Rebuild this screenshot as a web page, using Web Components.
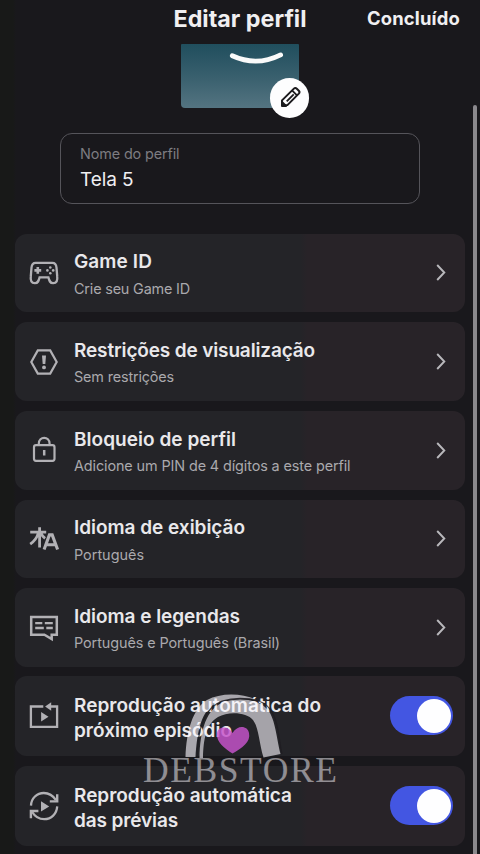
<!DOCTYPE html>
<html lang="pt-BR">
<head>
<meta charset="utf-8">
<title>Editar perfil</title>
<style>
html,body{margin:0;padding:0;background:#19181c}
body{width:480px;height:854px;overflow:hidden;font-family:Inter,"Liberation Sans",sans-serif;color:#f0eff1}
</style>
</head>
<body>
<profile-screen></profile-screen>
<script>
const define = (name, html, setup) => customElements.define(name, class extends HTMLElement {
  connectedCallback() {
    if (this.shadowRoot) return;
    const t = document.createElement('template');
    t.innerHTML = html;
    this.attachShadow({mode: 'open'}).append(t.content.cloneNode(true));
    if (setup) setup(this, this.shadowRoot);
  }
});

/* One line of text tracked to a given width. */
define('fit-text', `<style>:host{display:block;white-space:nowrap}span{display:inline-block}</style><span><slot></slot></span>`, (el, root) => {
  const s = root.querySelector('span');
  const n = el.textContent.length;
  s.style.letterSpacing = ((+el.getAttribute('w') - s.getBoundingClientRect().width) / n) + 'px';
});

const icons = {
  game: `<path d="M6.600 4.8H23.4C26.2 4.8 27.2 6.600 27.5 9.6L28.2 18.2C28.700 22.6 27.6 25.2 24.2 25.2C20.8 25.2 20.2 22.600 19.4 19.4H10.600C9.800 22.6 9.2 25.2 5.8 25.2C2.400 25.2 1.3 22.6 1.8 18.2L2.5 9.6C2.8 6.600 3.8 4.8 6.600 4.8Z" stroke-width="2.3"/><path d="M8.800 9V15.8M5.4 12.4H12.200" stroke-width="2.6"/><g fill="currentColor" stroke="none"><circle cx="21.3" cy="9.5" r="1.3"/><circle cx="21.3" cy="15.300" r="1.3"/><circle cx="18.4" cy="12.4" r="1.3"/><circle cx="24.2" cy="12.4" r="1.3"/></g>`,
  limit: `<path d="M8.8 3.4H21.2L27.7 15L21.2 26.6H8.8L2.3 15Z" /><path d="M13 8.6H17L16.3 17H13.7Z" fill="currentColor" stroke="none"/><circle cx="15" cy="20.4" r="1.9" fill="currentColor" stroke="none"/>`,
  lock: `<rect x="5" y="10.200" width="20.5" height="15.6" rx="2"/><path d="M9.8 10V8.7C9.8 .9 20.6 .9 20.6 8.7V10"/><path d="M15.2 15V20.5" stroke-width="2.5"/>`,
  lang: `<path d="M1.2 8.1H17.2M10.6 3.2V23.4M9.3 9Q7.5 15.8 1.2 20.1M12 9.4Q13.5 12.6 16.1 14.4" stroke-width="2.8"/><path d="M15.1 25.5L20.4 10.9H23.2L28.6 25.5M16.8 20.8H27" stroke-width="3.1"/>`,
  subs: `<path d="M2.2 3.9H27.8V21.7H22.7V26L15.4 21.7H2.2Z" stroke-width="2.5"/><path d="M6.2 10.1H13.3M15.8 10.1H23.8M6.2 15H14.8M17.3 15H23.8" stroke-width="2.3"/>`,
  next: `<path d="M14.3 5.500H1.9V25.800H28.1V5.500H20" stroke-width="2.3"/><path d="M16.1 5.500L22.2 1.300V9.700Z" fill="currentColor" stroke="none"/><path d="M12.1 11V20.4L19.5 15.7Z" fill="currentColor" stroke="none"/>`,
  loop: `<path d="M2 14.6C2.2 7.2 8 2 14.8 2C20 2 24.3 5 27 9.2M28.2 15.4C27.8 22.8 22.2 28.2 15.2 28.2C10 28.2 5.7 25.2 3.2 21" stroke-width="2.3"/><path d="M28.2 3.2V10.4H20.8M1.9 27.3V20H9.4" stroke-width="2.4"/><path d="M12 10.3V20.6L20.2 15.4Z" fill="currentColor" stroke="none"/>`
};
define('row-icon', `<style>:host{display:block;width:30px;height:30px;color:#b2b1b5}svg{display:block;overflow:visible}</style><svg width="30" height="30" viewBox="0 0 30 30" fill="none" stroke="currentColor" stroke-width="2.2"></svg>`,
  (el, root) => root.querySelector('svg').innerHTML = icons[el.getAttribute('name')]);

define('chevron-icon', `<style>:host{display:block;width:10px;height:17px}svg{display:block}</style><svg width="10" height="17" viewBox="0 0 10 17" fill="none" stroke="#b9b8bc" stroke-width="1.9"><path d="M1.2 1L8.3 8.5L1.2 16"/></svg>`);

define('toggle-switch', `<style>
:host{display:flex;justify-content:flex-end;align-items:center;width:63px;height:39px;border-radius:20px;background:#4356e2;box-sizing:border-box;padding-right:2px}
i{width:34px;height:34px;border-radius:50%;background:#fefeff}
</style><i></i>`);

define('setting-row', `<style>
:host{display:grid;grid-template-columns:30px 1fr auto;column-gap:15px;box-sizing:border-box;height:78.7px;padding:0 19px 0 14px;border-radius:12px;background:linear-gradient(90deg,#242428 286px,#282328 292px)}
:host([tall]){height:80px;padding-right:12px}
.i{align-self:center}
.t{padding-top:15.700px;font-weight:600;font-size:19px;line-height:25px;color:#e9e8eb}
:host([tall]) .t{padding-top:16.800px}
.s{display:block;margin-top:4.5px;font-weight:400;font-size:14.4px;line-height:20px;color:#aaa9ad}
.e{align-self:center}
</style><div class="i"><slot name="icon"></slot></div><div class="t"><slot></slot><div class="s"><slot name="sub"></slot></div></div><div class="e"><slot name="end"></slot></div>`,
  el => {
    const ic = document.createElement('row-icon');
    ic.slot = 'icon';
    ic.setAttribute('name', el.getAttribute('icon'));
    el.append(ic);
  });

define('profile-avatar', `<style>
:host{display:block;position:relative;width:118px;height:64px;background:linear-gradient(#204e5d,#385f6d 50%,#547481);border-radius:1px 1px 4px 4px}
.smile{position:absolute;left:48px;top:8px}
.edit{position:absolute;left:88.5px;top:34px;width:39.5px;height:39.5px;border-radius:50%;background:#fdfdfe}
svg{display:block}
</style>
<svg class="smile" width="56" height="14" fill="none" stroke="#fafafa" stroke-width="4.8" stroke-linecap="round"><path d="M3.3 3.8Q27.5 15 51.6 2.9"/></svg>
<div class="edit"><svg width="40" height="40" viewBox="0 0 40 40" fill="none" stroke="#1c1b1e" stroke-width="2" stroke-linejoin="round"><path d="M12 27.800V22.4L23.900 10.600Q25.3 9.200 26.800 10.700L28.800 12.7Q30.2 14.1 28.800 15.6L17.4 27.1L12 27.800"/><path d="M22.3 12.6L27 17.3M16.700 23.4L23.700 16.300" stroke-width="1.8"/><path d="M12 24V28H16Z" fill="#1c1b1e"/></svg></div>`);

define('name-field', `<style>
:host{display:block;box-sizing:border-box;width:360px;height:71.5px;border:1.5px solid #55545a;border-radius:12px;padding:9.5px 19px}
.l{font-size:14.4px;line-height:22px;color:#7d7c81}
.v{font-size:19px;line-height:30px;color:#f0eff2}
</style><div class="l"><slot name="label"></slot></div><div class="v"><slot></slot></div>`);

define('shop-mark', `<style>
:host{display:block;position:absolute;left:140px;top:690px;width:200px;height:100px}
svg{display:block}
.w{position:absolute;left:3px;top:60px;font-family:"Liberation Serif",serif;font-size:35.500px;line-height:40px;color:#fcf9ff80}
</style>
<svg width="200" height="66" viewBox="140 690 200 66" overflow="visible">
<path d="M185.500 757C186.500 731 192.500 709 207 700C220 693 240 692.500 256 699.500C240 697 223 699 213 705C200 714 197 735 195.500 757Z" fill="#fcf9ff" opacity=".62"/>
<path d="M199.500 758C200 731 206 708 225 701.500C239 697.500 257 699 266 708C275 716 276 735 280.500 754L263.500 757.5C259 743 259 728 253 720C247 712 228 711 218 717C206 724 203.500 739 203 758Z" fill="#fcf9ff" opacity=".6"/>
<path d="M197.300 757C197.500 731 204 708 222 701C238 696 262 698 269 708C279 720 278 737 282 754" fill="none" stroke="#1e1c21" stroke-width="1.2" opacity=".8"/>
<path d="M232.500 753.500C224 748 216.500 742 217 734C217 726 228 725 232.500 733C238 724 248 726 249 733C251 742 242 748 232.500 753.500Z" fill="#c653cb" opacity=".84"/>
</svg><fit-text class="w" w="195.500">DEBSTORE</fit-text>`);

define('profile-screen', `<style>
:host{display:block;position:relative;width:480px;height:854px;overflow:hidden;background:linear-gradient(90deg,#181918 13px,#19181c 16px)}
header{display:grid;grid-template-columns:1fr 133px 1fr;align-items:center;height:37px;font-weight:650;font-size:23.300px}
header .done{justify-self:end;margin:0 20px 2px 0;font-size:18.400px}
main{display:flex;flex-direction:column;align-items:center}
profile-avatar{margin:7px 0 24.500px}
section{display:flex;flex-direction:column;gap:10px;width:450px;margin-top:29.5px}
.tall{margin-top:-1px}
.bar{position:absolute;left:472.5px;top:105px;width:4.500px;height:760px;border-radius:3px;background:#8b898d}
</style>
<header><span></span><fit-text w="133">Editar perfil</fit-text><fit-text class="done" w="93">Concluído</fit-text></header>
<main>
<profile-avatar></profile-avatar>
<name-field><fit-text slot="label" w="99.500">Nome do perfil</fit-text><fit-text w="53.500">Tela 5</fit-text></name-field>
<section>
<setting-row icon="game"><fit-text w="78">Game ID</fit-text><fit-text slot="sub" w="116">Crie seu Game ID</fit-text><chevron-icon slot="end"></chevron-icon></setting-row>
<setting-row icon="limit"><fit-text w="241">Restrições de visualização</fit-text><fit-text slot="sub" w="100">Sem restrições</fit-text><chevron-icon slot="end"></chevron-icon></setting-row>
<setting-row icon="lock"><fit-text w="162">Bloqueio de perfil</fit-text><fit-text slot="sub" w="276.500">Adicione um PIN de 4 dígitos a este perfil</fit-text><chevron-icon slot="end"></chevron-icon></setting-row>
<setting-row icon="lang"><fit-text w="171">Idioma de exibição</fit-text><fit-text slot="sub" w="70">Português</fit-text><chevron-icon slot="end"></chevron-icon></setting-row>
<setting-row icon="subs"><fit-text w="166">Idioma e legendas</fit-text><fit-text slot="sub" w="206">Português e Português (Brasil)</fit-text><chevron-icon slot="end"></chevron-icon></setting-row>
<setting-row class="tall" icon="next" tall><fit-text w="247">Reprodução automática do</fit-text><fit-text w="158">próximo episódio</fit-text><toggle-switch slot="end"></toggle-switch></setting-row>
<setting-row icon="loop" tall><fit-text w="218">Reprodução automática</fit-text><fit-text w="104">das prévias</fit-text><toggle-switch slot="end"></toggle-switch></setting-row>
</section>
</main>
<div class="bar"></div>
<shop-mark></shop-mark>`);
</script>
</body>
</html>
